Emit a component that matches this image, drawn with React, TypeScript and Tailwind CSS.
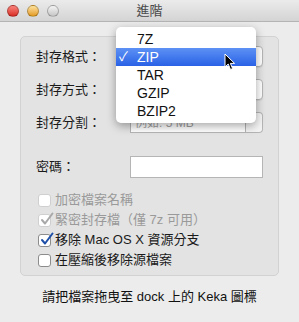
import React from "react";

const font = { fontFamily: '"Liberation Sans", "Noto Sans CJK TC", sans-serif' };

function TrafficLight({ color }: { color: string }) {
  return (
    <div
      className={`h-[12px] w-[12px] rounded-full border border-black/25 ${color}`}
    />
  );
}

function PopupEnd() {
  return (
    <div className="flex h-[21px] w-[133px] items-center justify-end rounded-[4px] border border-[#b5b5b5] bg-white shadow-[0_1px_1px_rgba(0,0,0,0.08)]">
      <div className="h-full w-[17px] border-l border-[#c8c8c8]" />
    </div>
  );
}

function Checkbox({
  label,
  checked,
  disabled,
}: {
  label: string;
  checked?: boolean;
  disabled?: boolean;
}) {
  return (
    <div className="flex h-[20px] items-center gap-[4px]">
      <div
        className={`relative h-[13px] w-[13px] rounded-[3px] border bg-white ${
          disabled ? "border-[#cfcfcf]" : "border-[#8c8c8c]"
        }`}
      >
        {checked && (
          <svg
            viewBox="0 0 14 14"
            className="absolute -top-[3px] left-[1px] h-[15px] w-[14px]"
          >
            <path
              d="M2 7.5 L5 11 L12.5 1"
              fill="none"
              stroke={disabled ? "#a8a8a8" : "#1d4fa8"}
              strokeWidth="2"
              strokeLinecap="round"
              strokeLinejoin="round"
            />
          </svg>
        )}
      </div>
      <span
        className={`text-[13px] ${disabled ? "text-[#9a9a9a]" : "text-[#1a1a1a]"}`}
      >
        {label}
      </span>
    </div>
  );
}

export default function App() {
  return (
    <div
      className="relative h-[322px] w-[299px] overflow-hidden bg-[#ececec]"
      style={font}
    >
      {/* Title bar */}
      <div className="relative flex h-[22px] items-center border-b border-[#b4b4b4] bg-gradient-to-b from-[#ebebeb] to-[#d4d4d4] px-[7px]">
        <div className="flex gap-[8px]">
          <TrafficLight color="bg-gradient-to-b from-[#f9807a] to-[#d82a22]" />
          <TrafficLight color="bg-gradient-to-b from-[#fde29a] to-[#e39a13]" />
          <TrafficLight color="bg-gradient-to-b from-[#f4f4f4] to-[#c6c6c6]" />
        </div>
        <div className="absolute inset-0 flex items-center justify-center text-[13px] text-[#4a4a4a]">
          進階
        </div>
      </div>

      {/* Group box */}
      <div className="mx-[20px] mt-[14px] h-[240px] rounded-[5px] border border-[#d2d2d2] bg-[#e3e3e3] pl-[15px] pr-[15px] pt-[9px]">
        <div className="flex flex-col gap-[12px]">
          <div className="flex h-[21px] items-center justify-between">
            <span className="text-[13px] text-[#1a1a1a]">封存格式：</span>
            <PopupEnd />
          </div>
          <div className="flex h-[21px] items-center justify-between">
            <span className="text-[13px] text-[#1a1a1a]">封存方式：</span>
            <PopupEnd />
          </div>
          <div className="flex h-[21px] items-center justify-between">
            <span className="text-[13px] text-[#1a1a1a]">封存分割：</span>
            <div className="flex h-[21px] w-[133px] items-stretch">
              <div className="flex flex-1 items-center border border-[#b5b5b5] bg-white px-[4px] text-[12px] text-[#a0a0a0]">
                例如: 5 MB
              </div>
              <div className="w-[17px] rounded-r-[4px] border border-l-0 border-[#b5b5b5] bg-[#f4f4f4]" />
            </div>
          </div>
        </div>

        <div className="mt-[23px] flex h-[22px] items-center justify-between">
          <span className="text-[13px] text-[#1a1a1a]">密碼：</span>
          <div className="h-[22px] w-[133px] border border-[#b5b5b5] bg-white" />
        </div>

        <div className="mt-[12px] flex flex-col pl-[2px]">
          <Checkbox label="加密檔案名稱" disabled />
          <Checkbox label="緊密封存檔（僅 7z 可用）" checked disabled />
          <Checkbox label="移除 Mac OS X 資源分支" checked />
          <Checkbox label="在壓縮後移除源檔案" />
        </div>
      </div>

      <div className="mt-[11px] text-center text-[13px] text-[#111]">
        請把檔案拖曳至 dock 上的 Keka 圖標
      </div>

      {/* Dropdown menu overlay */}
      <div className="absolute left-[116px] top-[27px] w-[140px] rounded-[5px] bg-white py-[3px] shadow-[0_3px_10px_rgba(0,0,0,0.35)]">
        {["7Z", "ZIP", "TAR", "GZIP", "BZIP2"].map((item) => {
          const active = item === "ZIP";
          return (
            <div
              key={item}
              className={`relative flex h-[18px] items-center pl-[21px] text-[14px] ${
                active
                  ? "bg-gradient-to-b from-[#5d91f4] to-[#2a61e6] text-white"
                  : "text-[#111]"
              }`}
            >
              {active && (
                <span className="absolute left-[3px] text-[13px]">✓</span>
              )}
              {item}
            </div>
          );
        })}
      </div>

      {/* Mouse cursor */}
      <svg
        viewBox="0 0 12 18"
        className="absolute left-[224px] top-[53px] h-[18px] w-[12px]"
      >
        <path
          d="M1 1 L1 14 L4.2 11 L6.5 16.5 L8.6 15.6 L6.4 10.4 L10.6 10.4 Z"
          fill="#000"
          stroke="#fff"
          strokeWidth="1"
          strokeLinejoin="round"
        />
      </svg>
    </div>
  );
}
